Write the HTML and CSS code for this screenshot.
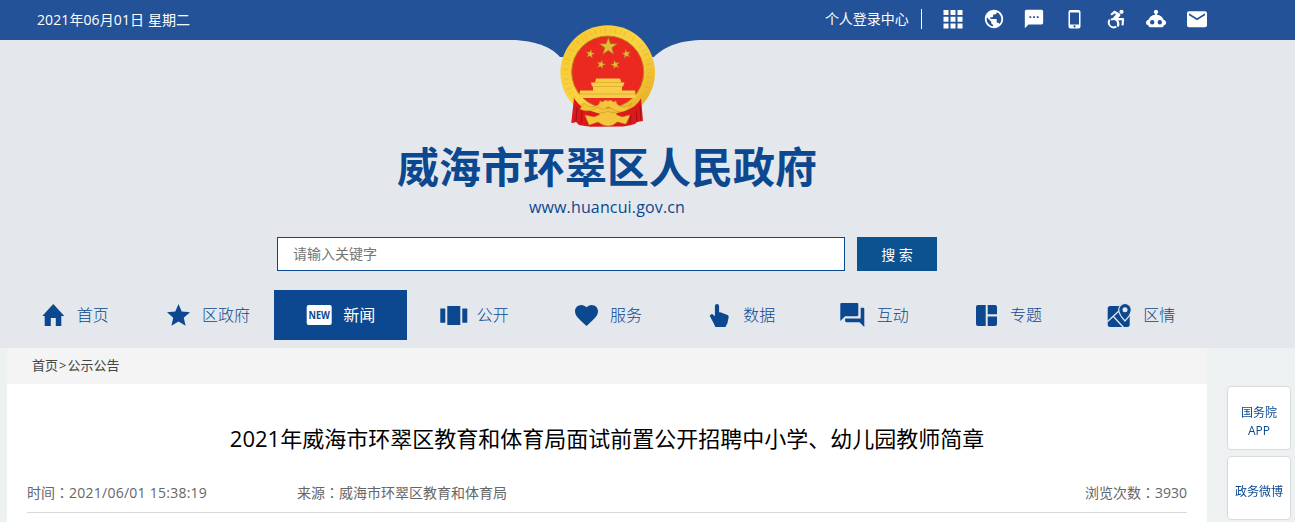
FILE: index.html
```html
<!DOCTYPE html>
<html lang="zh-CN">
<head>
    <meta charset="UTF-8">
    <meta name="viewport" content="width=device-width, initial-scale=1.0">
    <title>威海市环翠区人民政府</title>
    <link rel="stylesheet" href="styles.css">
</head>
<body>
    <header class="header">
        <div class="topbar">
            <div class="container topbar-inner">
                <span class="date">2021年06月01日 星期二</span>
                <a class="login" href="#">个人登录中心</a>
                <div class="tools">
                    <a href="#"><svg viewBox="0 0 22 22"><path d="M1.500 2h5v5h-5zM8.500 2h5v5h-5zM15.500 2h5v5h-5zM1.500 8.700h5v5h-5zM8.500 8.700h5v5h-5zM15.500 8.700h5v5h-5zM1.500 15.400h5v5h-5zM8.500 15.400h5v5h-5zM15.500 15.400h5v5h-5z"/></svg></a>
                    <a href="#"><svg viewBox="0 0 24 24"><path d="M12 2C6.480 2 2 6.480 2 12s4.480 10 10 10 10-4.480 10-10S17.520 2 12 2zm-1 17.930c-3.950-.49-7-3.850-7-7.930 0-.62.08-1.210.21-1.790L9 15v1c0 1.100.9 2 2 2v1.930zm6.900-2.540c-.26-.81-1-1.390-1.900-1.390h-1v-3c0-.55-.45-1-1-1H8v-2h2c.55 0 1-.45 1-1V7h2c1.100 0 2-.9 2-2v-.41c2.930 1.190 5 4.060 5 7.410 0 2.080-.8 3.970-2.100 5.390z"/></svg></a>
                    <a href="#"><svg viewBox="0 0 24 24"><path d="M20 2H4c-1.100 0-2 .9-2 2v18l4-4h14c1.100 0 2-.9 2-2V4c0-1.100-.9-2-2-2zM9 11H7V9h2v2zm4 0h-2V9h2v2zm4 0h-2V9h2v2z"/></svg></a>
                    <a href="#"><svg viewBox="0 0 22 22"><path d="M6.500 2h8a2 2 0 0 1 2 2v14.500a2 2 0 0 1-2 2h-8a2 2 0 0 1-2-2V4a2 2 0 0 1 2-2zm-.5 2.500v12h9v-12zm4.500 12.800a1.100 1.100 0 1 0 0 2.200 1.100 1.100 0 0 0 0-2.200z" fill-rule="evenodd"/></svg></a>
                    <a href="#"><svg viewBox="0 0 24 24"><circle cx="18" cy="4.200" r="2.300"/><path d="M19.400 10.800l-5 .2 2-2.300c.7-.9.5-2-.4-2.600L11.200 3.300c-.6-.3-1.200-.3-1.800.2L5.900 6.600l1.500 1.700 2.900-2.400 1.700 1-3.400 3.900a6.200 6.200 0 0 0-3 1.300l1.600 1.600a4.200 4.200 0 0 1 5.700 5.700l1.600 1.600a6.200 6.200 0 0 0 .9-5.900l-1.300-1.600 4.300-.2-.4 5.600 2.300.2.600-6.700c.1-1-.6-1.700-1.500-1.600zM9.200 20.200a4.200 4.200 0 0 1-3.400-6.600l-1.600-1.600a6.500 6.500 0 0 0 9 9l-1.600-1.600c-.7.500-1.500.8-2.400.8z"/></svg></a>
                    <a href="#"><svg viewBox="0 0 22 22"><path d="M11 1.700a2.200 2.200 0 0 1 .9 4.200v.8c3.500.3 6.100 2.600 6.900 5.400 1.400.3 2.300 1.300 2.300 2.600 0 1.500-1 2.400-2.300 2.700-.3 1.300-1.100 1.800-2.200 1.800h-11c-1.100 0-1.900-.5-2.200-1.800C2 17.100 1 16.200 1 14.700c0-1.300.9-2.300 2.300-2.600.8-2.800 3.400-5.100 6.800-5.400v-.8A2.200 2.200 0 0 1 11 1.700zM7.200 12a2.200 2.200 0 1 0 0 4.400 2.200 2.200 0 0 0 0-4.400zm7.600 0a2.200 2.200 0 1 0 0 4.400 2.200 2.200 0 0 0 0-4.400z" fill-rule="evenodd"/></svg></a>
                    <a href="#"><svg viewBox="0 0 22 22"><path d="M3 3.200h16a2 2 0 0 1 2 2v12a2 2 0 0 1-2 2H3a2 2 0 0 1-2-2v-12a2 2 0 0 1 2-2zm0 2v2l8 5 8-5v-2l-8 5z" fill-rule="evenodd"/></svg></a>
                </div>
            </div>
        </div>

        <div class="container brand">
            <svg class="curve" viewBox="0 0 184 30"><path d="M0 0C24 2 36 8 44 17H138C147 8 160 1 184 0z"/></svg>
            <svg class="emblem" viewBox="0 0 96 102">
                <defs>
                    <linearGradient id="gold" x1="0" y1="0" x2="1" y2="1">
                        <stop offset="0" stop-color="#f5c52c"/>
                        <stop offset=".5" stop-color="#fbd544"/>
                        <stop offset="1" stop-color="#e2a820"/>
                    </linearGradient>
                    <polygon id="star" points="0,-10 2.400,-3.200 9.500,-3.100 3.800,1.200 5.900,8.100 0,4 -5.900,8.100 -3.800,1.200 -9.500,-3.100 -2.400,-3.200"/>
                </defs>
                <circle cx="47.700" cy="47.500" r="47.300" fill="url(#gold)"/>
                <circle cx="47.700" cy="47.500" r="42" fill="none" stroke="#d9a326" stroke-width="5" stroke-dasharray="1 3 2 4" opacity=".25"/>
                <circle cx="47.700" cy="47" r="36" fill="#eb2920" stroke="#b8821d"/>
                <g fill="#e5ba39" stroke="#a9681b" stroke-width=".8">
                    <use href="#star" transform="translate(48.300 21.700) scale(.95)"/>
                    <use href="#star" transform="translate(30.300 29) scale(.47) rotate(10)"/>
                    <use href="#star" transform="translate(66.300 29) scale(.47) rotate(-10)"/>
                    <use href="#star" transform="translate(41 39.500) scale(.47) rotate(15)"/>
                    <use href="#star" transform="translate(55.300 39.700) scale(.47) rotate(-15)"/>
                </g>
                <path d="M36 53.500h24l1.500 4h3l-1.500 4h-1v4h13l1 7.500H19l1-7.500h13v-4h-1l-1-4h4z" fill="#f7ce48"/>
                <path d="M35 57.500h26M33 61.500h30M20 69h55" stroke="#dda528" stroke-width=".7"/>
                <path d="M14 73c4 7 11 12 20 14l13 4 14-4c9-2 17-7 20-14l2 23-6 1-2 2-6 1.500-6 1-32 .3-6-.8-6-1-3-3-3 1-2-.5L11.500 96z" fill="#d9191b"/>
                <path d="M17 82l-1 14M22 86l-1 12M76 86l1 11M80 80l1 15M27 90l1 9M71 90l-1 9" stroke="#a90d12" fill="none"/>
                <path d="M24 78c5 5 11 5 15 1l1-3 3 1 2-2 3 1 3-1 2 2 3-1 1 3c4 4 10 4 15-1l-5 7c-6 3-11 2-14-1l-5-2-5 3-5-3c-5 4-13 5-18 2z" fill="#f4c43d" stroke="#c58a20" stroke-width=".5"/>
                <path d="M25 90l9 2 5-2 2-3 3 1 4-2 4 2 3-1 2 3 5 2 8-2-4 9c-5-1-7-2-9-2l-4 3-5 1-5-1-5-3-6 2-3 1z" fill="#f4c43d" stroke="#c58a20" stroke-width=".5"/>
            </svg>
            <h1 class="site-name">威海市环翠区人民政府</h1>
            <p class="site-url">www.huancui.gov.cn</p>
        </div>

        <form class="search">
            <input type="text" placeholder="请输入关键字">
            <button type="button">搜 索</button>
        </form>

        <nav class="container nav">
            <a href="#"><svg viewBox="0 0 28 28"><path d="M13.300 3l11 12h-3v10h-5.500v-8h-5v8H4.700V15H2.300z"/></svg><span>首页</span></a>
            <a href="#"><svg viewBox="0 0 28 28"><path transform="translate(-.3 .7) scale(1.150)" d="M12 17.270L18.180 21l-1.640-7.030L22 9.240l-7.190-.61L12 2 9.190 8.630 2 9.240l5.460 4.730L5.820 21z"/></svg><span>区政府</span></a>
            <a href="#" class="active"><svg viewBox="0 0 28 28"><rect x=".7" y="4" width="25" height="20" rx="2"/><text class="new" x="2.500" y="18" textLength="21.500" lengthAdjust="spacingAndGlyphs">NEW</text></svg><span>新闻</span></a>
            <a href="#"><svg viewBox="0 0 28 28"><path d="M7.300 5h13v19h-13zM.3 7.500h5v14.300h-5zM22.300 7.500h5v14.300h-5z"/></svg><span>公开</span></a>
            <a href="#"><svg viewBox="0 0 28 28"><path transform="translate(-.3 .5) scale(1.150)" d="M12 21.350l-1.450-1.320C5.400 15.360 2 12.280 2 8.500 2 5.420 4.420 3 7.500 3c1.740 0 3.410.81 4.500 2.090C13.090 3.810 14.760 3 16.500 3 19.580 3 22 5.420 22 8.500c0 3.780-3.400 6.860-8.550 11.540L12 21.350z"/></svg><span>服务</span></a>
            <a href="#"><svg viewBox="0 0 28 28"><path d="M8.900 5.200a2.100 2.100 0 0 1 4.200 0v6h1.200l7.200 2.700q1.300.6 1.200 2l-1.300 6.300-2 3.800h-10l-2-4.200-3.700-7 1.200-1.300q.6-.6 1.600-.3l2.400 2z"/></svg><span>数据</span></a>
            <a href="#"><svg viewBox="0 0 28 28"><path transform="translate(-2.100 -.4) scale(1.200)" d="M21 6h-2v9H6v2c0 .55.45 1 1 1h11l4 4V7c0-.55-.45-1-1-1zm-4 6V3c0-.55-.45-1-1-1H3c-.55 0-1 .45-1 1v14l4-4h10c.55 0 1-.45 1-1z"/></svg><span>互动</span></a>
            <a href="#"><svg viewBox="0 0 28 28"><path d="M5 4h7.700v21H5a2 2 0 0 1-2-2V6a2 2 0 0 1 2-2zM14.700 4H22a2 2 0 0 1 2 2v7.200h-9.300zM14.700 15.400H24V23a2 2 0 0 1-2 2h-7.300z"/></svg><span>专题</span></a>
            <a href="#"><svg viewBox="0 0 28 28"><rect x="1.700" y="5" width="22" height="21" rx="2.500"/><path class="road" d="M1 21l13-12M7 15l11 12"/><path class="pin" d="M19 2.500a6.300 6.300 0 0 1 6.300 6.300c0 4.700-6.300 11.200-6.300 11.200s-6.300-6.500-6.300-11.200A6.300 6.300 0 0 1 19 2.500z"/><circle class="hole" cx="19" cy="8.800" r="2.500"/></svg><span>区情</span></a>
        </nav>
    </header>

    <main class="container content">
        <div class="breadcrumb"><a href="#">首页</a><span class="sep">&gt;</span><a href="#">公示公告</a></div>
        <h2 class="title">2021年威海市环翠区教育和体育局面试前置公开招聘中小学、幼儿园教师简章</h2>
        <div class="meta">
            <span class="time">时间<span class="colon" lang="zh-TW">：</span><span class="datetime">2021/06/01 15:38:19</span></span>
            <span class="source">来源<span class="colon" lang="zh-TW">：</span>威海市环翠区教育和体育局</span>
            <span>浏览次数<span class="colon" lang="zh-TW">：</span>3930</span>
        </div>
    </main>

    <aside class="side">
        <a href="#">国务院<br>APP</a>
        <a href="#">政务微博</a>
    </aside>
</body>
</html>
```
FILE: styles.css
```css
* {
    box-sizing: border-box;
}
body {
    margin: 0;
    height: 522px;
    overflow: hidden;
    background-color: #eef1f2;
    font-family: "Open Sans", "Noto Sans CJK SC", sans-serif;
    font-size: 14px;
}
a {
    color: inherit;
    text-decoration: none;
}
h1, h2, p {
    margin: 0;
}
.container {
    width: 1200px;
    margin-left: 7px;
}
.header {
    height: 348px;
    background-color: #e4e7ec;
}
.topbar {
    height: 40px;
    background-color: #235298;
    color: #fff;
}
.topbar-inner {
    display: flex;
    align-items: center;
    height: 38px;
    padding-left: 30px;
}
.date {
    letter-spacing: 0.1px;
}
.login {
    margin-left: auto;
    padding-right: 12px;
    line-height: 20px;
    border-right: 1px solid #fff;
}
.tools {
    display: flex;
    gap: 18.7px;
    margin-left: 20px;
    margin-right: -1px;
}
.tools a, .tools svg {
    display: block;
    width: 22px;
    height: 22px;
    fill: #fff;
}
.brand {
    position: relative;
    height: 197px;
    padding-top: 101px;
    text-align: center;
    color: #0c4890;
}
.curve {
    position: absolute;
    top: 0;
    left: 509px;
    width: 184px;
    height: 30px;
    fill: #235298;
}
.emblem {
    position: absolute;
    top: -15px;
    left: 553px;
    width: 96px;
    height: 102px;
}
.site-name {
    font-size: 42px;
    line-height: 52px;
    font-weight: bold;
}
.site-url {
    font-size: 16px;
    line-height: 28px;
    letter-spacing: 0.15px;
}
.search {
    display: flex;
    gap: 12px;
    margin-left: 277px;
}
.search input {
    width: 568px;
    height: 34px;
    padding: 0 15px 2px;
    border: 1px solid #0c4890;
    background: #fff;
    font: inherit;
}
.search input::placeholder {
    color: #757575;
}
.search button {
    width: 80px;
    height: 34px;
    padding: 0;
    border: none;
    background-color: #0c5291;
    color: #fff;
    font: inherit;
}
.nav {
    display: flex;
    margin-top: 19px;
}
.nav a {
    display: flex;
    flex: 1;
    align-items: center;
    justify-content: center;
    gap: 8px;
    height: 50px;
    color: #0c4890;
    font-size: 16px;
    font-weight: 300;
}
.nav span {
    padding-bottom: 2px;
    margin-left: 1px;
    margin-right: -1px;
}
.nav svg {
    width: 28px;
    height: 28px;
    fill: currentColor;
}
.nav .active {
    background-color: #0c4890;
    color: #fff;
    font-weight: normal;
}
.nav .new {
    fill: #0c4890;
    font: bold 11px "Open Sans", sans-serif;
}
.nav .road {
    fill: none;
    stroke: #e4e7ec;
    stroke-width: 1.3;
}
.nav .pin {
    stroke: #e4e7ec;
    stroke-width: 1.2;
}
.nav .hole {
    fill: #e4e7ec;
}
.content {
    height: 174px;
    background-color: #fff;
}
.breadcrumb {
    height: 36px;
    padding-left: 25px;
    background-color: #f4f4f4;
    color: #444;
    font-size: 13px;
    line-height: 35px;
}
.sep {
    padding: 0 1px;
}
.title {
    margin-top: 34px;
    color: #000;
    font-size: 22px;
    font-weight: normal;
    line-height: 40px;
    text-align: center;
}
.meta {
    display: flex;
    justify-content: space-between;
    height: 40px;
    margin: 15px 20px 0;
    border-bottom: 1px solid #d9d9d9;
    color: #666;
    line-height: 40px;
}
.time {
    width: 270px;
}
.datetime {
    letter-spacing: 0.25px;
}
.colon {
    font-family: "Noto Sans CJK TC", sans-serif;
    line-height: 1;
}
.source {
    flex: 1;
}
.side {
    position: fixed;
    top: 386px;
    right: 4px;
    display: flex;
    flex-direction: column;
    gap: 6px;
}
.side a {
    display: flex;
    align-items: center;
    justify-content: center;
    width: 64px;
    height: 64px;
    padding-top: 8px;
    border: 1px solid #d8dadb;
    border-radius: 4px;
    background: #fff;
    color: #0c4890;
    font-size: 12px;
    line-height: 18px;
    text-align: center;
}
```
